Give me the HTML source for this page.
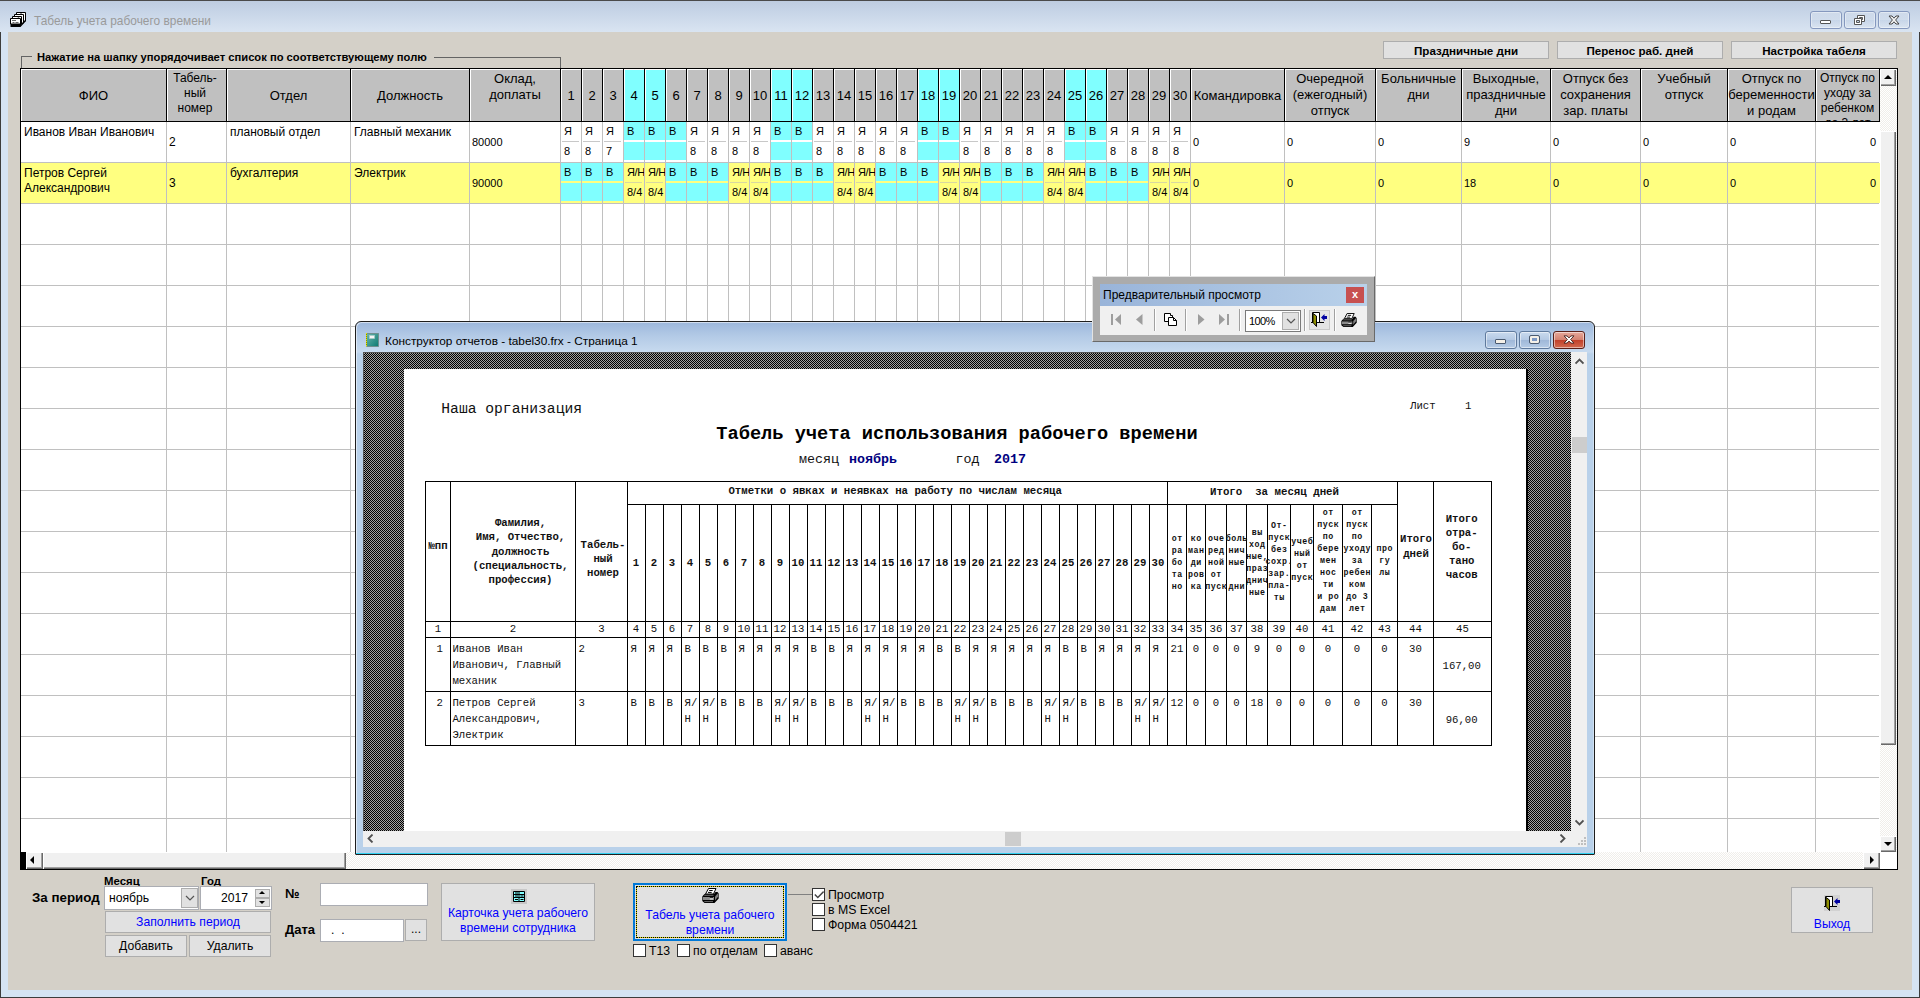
<!DOCTYPE html>
<html lang="ru"><head><meta charset="utf-8"><title>Табель учета рабочего времени</title>
<style>

*{box-sizing:border-box;margin:0;padding:0}
html,body{width:1920px;height:998px;overflow:hidden}
body{position:relative;background:#D4D0C8;font-family:"Liberation Sans",sans-serif;font-size:13px;color:#000;line-height:1}
.a{position:absolute}
.t{position:absolute;white-space:nowrap}
/* main frame */
#tb{left:0;top:0;width:1920px;height:32px;background:linear-gradient(#BDCBDF 0,#C5D3E6 30%,#D9E4F1 100%)}
#tbtop{left:0;top:0;width:1920px;height:1px;background:#4A4A4A}
#bl{left:0;top:32px;width:8px;height:966px;background:#D5E3F3;border-left:1px solid #3C3C3C}
#br{left:1912px;top:32px;width:8px;height:966px;background:#D5E3F3;border-right:1px solid #3C3C3C}
#bb{left:0;top:990px;width:1920px;height:8px;background:#D5E3F3;border-bottom:1px solid #3C3C3C;border-left:1px solid #3C3C3C;border-right:1px solid #3C3C3C}
#title{left:34px;top:14px;font-size:11.9px;color:#9A9A9A;line-height:15px}
.wb{position:absolute;top:11px;height:18px;border:1px solid #8598BE;border-radius:3px;background:linear-gradient(rgba(255,255,255,.12),rgba(255,255,255,.04) 50%,rgba(120,150,200,.08) 51%,rgba(255,255,255,.1));box-shadow:inset 0 0 0 1px rgba(255,255,255,.4)}
/* buttons */
.btn{position:absolute;background:#E1E1E1;border:1px solid #ADADAD;text-align:center;white-space:nowrap}
.bb{font-weight:bold;font-size:11.6px}
.blue{color:#0000FF}
/* grid */
#grid{left:20px;top:68px;width:1878px;height:802px;border:1px solid #000;background:#fff;overflow:hidden}
.hc{position:absolute;top:0;height:53px;background:#C0C0C0;border-right:1px solid #000;border-bottom:1px solid #000;box-shadow:inset 1px 1px 0 #fff;display:flex;align-items:center;justify-content:center;text-align:center;font-size:13px;line-height:16px;overflow:hidden}
.hc.cy{background:#80FFFF}
.vl{position:absolute;top:53px;width:1px;height:730px;background:#C0C0C0}
.hl{position:absolute;left:0;width:1858px;height:1px;background:#C0C0C0}
.row{position:absolute;left:0;width:1859px;height:40px}
.yl{background:#FFFF80}
.c{position:absolute;font-size:12px;line-height:15px;white-space:nowrap}
.n{position:absolute;font-size:11px;line-height:13px;white-space:nowrap}
.d{position:absolute;width:20px;height:18px;font-size:11px;line-height:18px;padding-left:3px;white-space:nowrap;overflow:hidden}
.d.cy{background:#80FFFF}
.ds{position:absolute;height:1px;width:17px;background:#C8C8C8}
.dith{background:repeating-conic-gradient(#fff 0 25%,#F0EEEA 0 50%) 0 0/2px 2px}
.sb{position:absolute;background:#F0F0F0;box-shadow:inset 1px 1px 0 #fff,inset -1px -1px 0 #696969,inset -2px -2px 0 #A0A0A0}
.arr{position:absolute;width:0;height:0;border:4px solid transparent}
/* report window */
#rw{left:355px;top:321px;width:1240px;height:534px;border:1px solid #1E1E1E;border-radius:6px 6px 1px 1px;background:linear-gradient(#9CB7DC 0,#B3CAE6 14px,#C7DAEF 30px,#B9D1EA 32px,#B9D1EA 100%);box-shadow:inset 1px 1px 0 rgba(255,255,255,.55),inset -1px 0 0 rgba(255,255,255,.35);overflow:hidden}
#rwin{left:7px;top:30px;width:1224px;height:495px;background:#F0F0F0;overflow:hidden}
#dark{left:0;top:0;width:1208px;height:479px;border-top:1px solid #555;border-left:1px solid #555;background:repeating-conic-gradient(#000 0 25%,#A0A0A0 0 50%) 0 0/2px 2px}
#page{left:41px;top:17px;width:1124px;height:462px;background:#fff;border-right:2px solid #000;font-family:"Liberation Mono",monospace;color:#111}
.rt{position:absolute;white-space:pre;font-family:"Liberation Mono",monospace}
.rl{position:absolute;background:#000}
.r8{font-size:10.67px;line-height:14px}
.r6{font-size:8px;line-height:12px;font-weight:bold;text-align:center;white-space:pre}
.rc{position:absolute;text-align:center;white-space:pre;font-family:"Liberation Mono",monospace}
/* toolbar */
#pt{left:1092px;top:276px;width:283px;height:66px;background:#ABABAB;border:1px solid;border-color:#E3E3E3 #696969 #696969 #E3E3E3}
#ptt{left:7px;top:7px;width:267px;height:22px;background:linear-gradient(90deg,#99B4D9,#B9D1EA)}
#ptb{left:7px;top:29px;width:267px;height:29px;background:#F0F0F0}
.sep{position:absolute;top:3px;width:2px;height:22px;border-left:1px solid #A0A0A0;border-right:1px solid #fff}
/* bottom */
.lb{position:absolute;font-weight:bold;white-space:nowrap}
.inp{position:absolute;background:#fff;border:1px solid #ABADB3}
.cb{position:absolute;width:13px;height:13px;background:#fff;border:1px solid #333}
.cl{position:absolute;font-size:12.3px;white-space:nowrap;line-height:15px}

</style></head>
<body>
<div id="tb" class="a"></div><div id="tbtop" class="a"></div>
<div id="bl" class="a"></div><div id="br" class="a"></div><div id="bb" class="a"></div>
<svg class="a" style="left:10px;top:12px" width="16" height="15" viewBox="0 0 16 15">
<path d="M16 1v8l-5.500 6h-10v-3h10z" fill="#000"/>
<path d="M6.500 .5h9v8.500h-9z" fill="#fff" stroke="#000"/>
<path d="M4.500 2.500h9v8.500h-9z" fill="#fff" stroke="#000"/>
<path d="M2.500 4.500h9v8h-9z" fill="#fff" stroke="#000"/>
<path d="M.5 6.500h10v5.500h-10z" fill="#fff" stroke="#000"/>
<path d="M11 .2l1 1.300h-2zM8.500 4.200l1 1.300h-2z" fill="#000"/>
<path d="M2 8.500h4M2.500 10.500h2M5.500 10.500h3" stroke="#555" stroke-width=".9"/></svg>
<div id="title" class="t">Табель учета рабочего времени</div>
<div class="wb" style="left:1810px;width:32px"><div class="a" style="left:9px;top:8px;width:11px;height:4px;background:#fff;border:1px solid #555;border-radius:1px"></div></div>
<div class="wb" style="left:1844px;width:32px"><svg class="a" style="left:8px;top:1px" width="14" height="14" viewBox="0 0 14 14"><path d="M4.500 2.500h7v6h-7z" fill="#fff" stroke="#555"/><path d="M6.500 4.500h3v2h-3z" fill="#C3D2E6" stroke="#555"/><path d="M1.500 5.500h7v6h-7z" fill="#fff" stroke="#555"/><path d="M3.500 7.500h3v2h-3z" fill="#C3D2E6" stroke="#555"/></svg></div>
<div class="wb" style="left:1878px;width:32px"><svg class="a" style="left:9px;top:3px" width="12" height="10" viewBox="0 0 12 10"><path d="M1 1h3l2 2.200 2-2.200h3l-3.400 4 3.400 4h-3l-2-2.200-2 2.200h-3l3.400-4z" fill="#F4F4F4" stroke="#444" stroke-linejoin="round"/></svg></div>
<div class="a" style="left:21px;top:56px;width:11px;height:1px;background:#646464"></div>
<div class="a" style="left:21px;top:56px;width:1px;height:12px;background:#646464"></div>
<div class="a" style="left:434px;top:57px;width:127px;height:1px;background:#646464"></div>
<div class="a" style="left:560px;top:57px;width:1px;height:11px;background:#646464"></div>
<div class="t" id="glab" style="left:37px;top:51px;font-weight:bold;font-size:11.2px;line-height:13px">Нажатие на шапку упорядочивает список по соответствующему полю</div>
<div class="btn bb" style="left:1383px;top:41px;width:166px;height:18px;line-height:18px;overflow:hidden">Праздничные дни</div>
<div class="btn bb" style="left:1557px;top:41px;width:166px;height:18px;line-height:18px;overflow:hidden">Перенос раб. дней</div>
<div class="btn bb" style="left:1731px;top:41px;width:166px;height:18px;line-height:18px;overflow:hidden">Настройка табеля</div>
<div id="grid" class="a">
<div class="hc" style="left:0px;width:146px;padding-top:2px;"><span>ФИО</span></div>
<div class="hc" style="left:146px;width:60px;font-size:12px;line-height:15px;align-items:flex-start;padding-top:1.500px;padding-right:3px;"><span>Табель-<br>ный<br>номер</span></div>
<div class="hc" style="left:206px;width:124px;padding-top:2px;"><span>Отдел</span></div>
<div class="hc" style="left:330px;width:119px;padding-top:2px;"><span>Должность</span></div>
<div class="hc" style="left:449px;width:91px;align-items:flex-start;padding-top:1.600px;"><span>Оклад,<br>доплаты</span></div>
<div class="hc" style="left:540px;width:21px;padding-top:2px;"><span>1</span></div>
<div class="hc" style="left:561px;width:21px;padding-top:2px;"><span>2</span></div>
<div class="hc" style="left:582px;width:21px;padding-top:2px;"><span>3</span></div>
<div class="hc cy" style="left:603px;width:21px;padding-top:2px;"><span>4</span></div>
<div class="hc cy" style="left:624px;width:21px;padding-top:2px;"><span>5</span></div>
<div class="hc" style="left:645px;width:21px;padding-top:2px;"><span>6</span></div>
<div class="hc" style="left:666px;width:21px;padding-top:2px;"><span>7</span></div>
<div class="hc" style="left:687px;width:21px;padding-top:2px;"><span>8</span></div>
<div class="hc" style="left:708px;width:21px;padding-top:2px;"><span>9</span></div>
<div class="hc" style="left:729px;width:21px;padding-top:2px;"><span>10</span></div>
<div class="hc cy" style="left:750px;width:21px;padding-top:2px;"><span>11</span></div>
<div class="hc cy" style="left:771px;width:21px;padding-top:2px;"><span>12</span></div>
<div class="hc" style="left:792px;width:21px;padding-top:2px;"><span>13</span></div>
<div class="hc" style="left:813px;width:21px;padding-top:2px;"><span>14</span></div>
<div class="hc" style="left:834px;width:21px;padding-top:2px;"><span>15</span></div>
<div class="hc" style="left:855px;width:21px;padding-top:2px;"><span>16</span></div>
<div class="hc" style="left:876px;width:21px;padding-top:2px;"><span>17</span></div>
<div class="hc cy" style="left:897px;width:21px;padding-top:2px;"><span>18</span></div>
<div class="hc cy" style="left:918px;width:21px;padding-top:2px;"><span>19</span></div>
<div class="hc" style="left:939px;width:21px;padding-top:2px;"><span>20</span></div>
<div class="hc" style="left:960px;width:21px;padding-top:2px;"><span>21</span></div>
<div class="hc" style="left:981px;width:21px;padding-top:2px;"><span>22</span></div>
<div class="hc" style="left:1002px;width:21px;padding-top:2px;"><span>23</span></div>
<div class="hc" style="left:1023px;width:21px;padding-top:2px;"><span>24</span></div>
<div class="hc cy" style="left:1044px;width:21px;padding-top:2px;"><span>25</span></div>
<div class="hc cy" style="left:1065px;width:21px;padding-top:2px;"><span>26</span></div>
<div class="hc" style="left:1086px;width:21px;padding-top:2px;"><span>27</span></div>
<div class="hc" style="left:1107px;width:21px;padding-top:2px;"><span>28</span></div>
<div class="hc" style="left:1128px;width:21px;padding-top:2px;"><span>29</span></div>
<div class="hc" style="left:1149px;width:21px;padding-top:2px;"><span>30</span></div>
<div class="hc" style="left:1170px;width:94px;padding-top:2px;"><span>Командировка</span></div>
<div class="hc" style="left:1264px;width:91px;align-items:flex-start;padding-top:1.600px;"><span>Очередной<br>(ежегодный)<br>отпуск</span></div>
<div class="hc" style="left:1355px;width:86px;align-items:flex-start;padding-top:1.600px;"><span>Больничные<br>дни</span></div>
<div class="hc" style="left:1441px;width:89px;align-items:flex-start;padding-top:1.600px;"><span>Выходные,<br>праздничные<br>дни</span></div>
<div class="hc" style="left:1530px;width:90px;align-items:flex-start;padding-top:1.600px;"><span>Отпуск без<br>сохранения<br>зар. платы</span></div>
<div class="hc" style="left:1620px;width:87px;align-items:flex-start;padding-top:1.600px;"><span>Учебный<br>отпуск</span></div>
<div class="hc" style="left:1707px;width:88px;align-items:flex-start;padding-top:1.600px;"><span>Отпуск по<br>беременности<br>и родам</span></div>
<div class="hc" style="left:1795px;width:64px;font-size:12px;line-height:15px;align-items:flex-start;padding-top:1.500px;"><span>Отпуск по<br>уходу за<br>ребенком<br>до 3 лет</span></div>
<div class="row yl" style="top:94px"></div>
<div class="hl" style="top:93px"></div>
<div class="hl" style="top:134px"></div>
<div class="hl" style="top:175px"></div>
<div class="hl" style="top:216px"></div>
<div class="hl" style="top:257px"></div>
<div class="hl" style="top:298px"></div>
<div class="hl" style="top:339px"></div>
<div class="hl" style="top:380px"></div>
<div class="hl" style="top:421px"></div>
<div class="hl" style="top:462px"></div>
<div class="hl" style="top:503px"></div>
<div class="hl" style="top:544px"></div>
<div class="hl" style="top:585px"></div>
<div class="hl" style="top:626px"></div>
<div class="hl" style="top:667px"></div>
<div class="hl" style="top:708px"></div>
<div class="hl" style="top:749px"></div>
<div class="vl" style="left:145px"></div>
<div class="vl" style="left:205px"></div>
<div class="vl" style="left:329px"></div>
<div class="vl" style="left:448px"></div>
<div class="vl" style="left:539px"></div>
<div class="vl" style="left:560px"></div>
<div class="vl" style="left:581px"></div>
<div class="vl" style="left:602px"></div>
<div class="vl" style="left:623px"></div>
<div class="vl" style="left:644px"></div>
<div class="vl" style="left:665px"></div>
<div class="vl" style="left:686px"></div>
<div class="vl" style="left:707px"></div>
<div class="vl" style="left:728px"></div>
<div class="vl" style="left:749px"></div>
<div class="vl" style="left:770px"></div>
<div class="vl" style="left:791px"></div>
<div class="vl" style="left:812px"></div>
<div class="vl" style="left:833px"></div>
<div class="vl" style="left:854px"></div>
<div class="vl" style="left:875px"></div>
<div class="vl" style="left:896px"></div>
<div class="vl" style="left:917px"></div>
<div class="vl" style="left:938px"></div>
<div class="vl" style="left:959px"></div>
<div class="vl" style="left:980px"></div>
<div class="vl" style="left:1001px"></div>
<div class="vl" style="left:1022px"></div>
<div class="vl" style="left:1043px"></div>
<div class="vl" style="left:1064px"></div>
<div class="vl" style="left:1085px"></div>
<div class="vl" style="left:1106px"></div>
<div class="vl" style="left:1127px"></div>
<div class="vl" style="left:1148px"></div>
<div class="vl" style="left:1169px"></div>
<div class="vl" style="left:1263px"></div>
<div class="vl" style="left:1354px"></div>
<div class="vl" style="left:1440px"></div>
<div class="vl" style="left:1529px"></div>
<div class="vl" style="left:1619px"></div>
<div class="vl" style="left:1706px"></div>
<div class="vl" style="left:1794px"></div>
<div class="c" style="left:3px;top:56px">Иванов Иван Иванович</div>
<div class="c" style="left:148px;top:66px">2</div>
<div class="c" style="left:209px;top:56px">плановый отдел</div>
<div class="c" style="left:333px;top:56px">Главный механик</div>
<div class="n" style="left:451px;top:67px">80000</div>
<div class="d" style="left:540px;top:53px;">Я</div>
<div class="d" style="left:540px;top:73px">8</div>
<div class="ds" style="left:541px;top:72px;background:#C8C8C8"></div>
<div class="d" style="left:561px;top:53px;">Я</div>
<div class="d" style="left:561px;top:73px">8</div>
<div class="ds" style="left:562px;top:72px;background:#C8C8C8"></div>
<div class="d" style="left:582px;top:53px;">Я</div>
<div class="d" style="left:582px;top:73px">7</div>
<div class="ds" style="left:583px;top:72px;background:#C8C8C8"></div>
<div class="d cy" style="left:603px;top:53px;">В</div>
<div class="d cy" style="left:603px;top:73px"></div>
<div class="ds" style="left:604px;top:72px;background:#fff"></div>
<div class="d cy" style="left:624px;top:53px;">В</div>
<div class="d cy" style="left:624px;top:73px"></div>
<div class="ds" style="left:625px;top:72px;background:#fff"></div>
<div class="d cy" style="left:645px;top:53px;">В</div>
<div class="d cy" style="left:645px;top:73px"></div>
<div class="ds" style="left:646px;top:72px;background:#fff"></div>
<div class="d" style="left:666px;top:53px;">Я</div>
<div class="d" style="left:666px;top:73px">8</div>
<div class="ds" style="left:667px;top:72px;background:#C8C8C8"></div>
<div class="d" style="left:687px;top:53px;">Я</div>
<div class="d" style="left:687px;top:73px">8</div>
<div class="ds" style="left:688px;top:72px;background:#C8C8C8"></div>
<div class="d" style="left:708px;top:53px;">Я</div>
<div class="d" style="left:708px;top:73px">8</div>
<div class="ds" style="left:709px;top:72px;background:#C8C8C8"></div>
<div class="d" style="left:729px;top:53px;">Я</div>
<div class="d" style="left:729px;top:73px">8</div>
<div class="ds" style="left:730px;top:72px;background:#C8C8C8"></div>
<div class="d cy" style="left:750px;top:53px;">В</div>
<div class="d cy" style="left:750px;top:73px"></div>
<div class="ds" style="left:751px;top:72px;background:#fff"></div>
<div class="d cy" style="left:771px;top:53px;">В</div>
<div class="d cy" style="left:771px;top:73px"></div>
<div class="ds" style="left:772px;top:72px;background:#fff"></div>
<div class="d" style="left:792px;top:53px;">Я</div>
<div class="d" style="left:792px;top:73px">8</div>
<div class="ds" style="left:793px;top:72px;background:#C8C8C8"></div>
<div class="d" style="left:813px;top:53px;">Я</div>
<div class="d" style="left:813px;top:73px">8</div>
<div class="ds" style="left:814px;top:72px;background:#C8C8C8"></div>
<div class="d" style="left:834px;top:53px;">Я</div>
<div class="d" style="left:834px;top:73px">8</div>
<div class="ds" style="left:835px;top:72px;background:#C8C8C8"></div>
<div class="d" style="left:855px;top:53px;">Я</div>
<div class="d" style="left:855px;top:73px">8</div>
<div class="ds" style="left:856px;top:72px;background:#C8C8C8"></div>
<div class="d" style="left:876px;top:53px;">Я</div>
<div class="d" style="left:876px;top:73px">8</div>
<div class="ds" style="left:877px;top:72px;background:#C8C8C8"></div>
<div class="d cy" style="left:897px;top:53px;">В</div>
<div class="d cy" style="left:897px;top:73px"></div>
<div class="ds" style="left:898px;top:72px;background:#fff"></div>
<div class="d cy" style="left:918px;top:53px;">В</div>
<div class="d cy" style="left:918px;top:73px"></div>
<div class="ds" style="left:919px;top:72px;background:#fff"></div>
<div class="d" style="left:939px;top:53px;">Я</div>
<div class="d" style="left:939px;top:73px">8</div>
<div class="ds" style="left:940px;top:72px;background:#C8C8C8"></div>
<div class="d" style="left:960px;top:53px;">Я</div>
<div class="d" style="left:960px;top:73px">8</div>
<div class="ds" style="left:961px;top:72px;background:#C8C8C8"></div>
<div class="d" style="left:981px;top:53px;">Я</div>
<div class="d" style="left:981px;top:73px">8</div>
<div class="ds" style="left:982px;top:72px;background:#C8C8C8"></div>
<div class="d" style="left:1002px;top:53px;">Я</div>
<div class="d" style="left:1002px;top:73px">8</div>
<div class="ds" style="left:1003px;top:72px;background:#C8C8C8"></div>
<div class="d" style="left:1023px;top:53px;">Я</div>
<div class="d" style="left:1023px;top:73px">8</div>
<div class="ds" style="left:1024px;top:72px;background:#C8C8C8"></div>
<div class="d cy" style="left:1044px;top:53px;">В</div>
<div class="d cy" style="left:1044px;top:73px"></div>
<div class="ds" style="left:1045px;top:72px;background:#fff"></div>
<div class="d cy" style="left:1065px;top:53px;">В</div>
<div class="d cy" style="left:1065px;top:73px"></div>
<div class="ds" style="left:1066px;top:72px;background:#fff"></div>
<div class="d" style="left:1086px;top:53px;">Я</div>
<div class="d" style="left:1086px;top:73px">8</div>
<div class="ds" style="left:1087px;top:72px;background:#C8C8C8"></div>
<div class="d" style="left:1107px;top:53px;">Я</div>
<div class="d" style="left:1107px;top:73px">8</div>
<div class="ds" style="left:1108px;top:72px;background:#C8C8C8"></div>
<div class="d" style="left:1128px;top:53px;">Я</div>
<div class="d" style="left:1128px;top:73px">8</div>
<div class="ds" style="left:1129px;top:72px;background:#C8C8C8"></div>
<div class="d" style="left:1149px;top:53px;">Я</div>
<div class="d" style="left:1149px;top:73px">8</div>
<div class="ds" style="left:1150px;top:72px;background:#C8C8C8"></div>
<div class="n" style="left:1172px;top:67px">0</div>
<div class="n" style="left:1266px;top:67px">0</div>
<div class="n" style="left:1357px;top:67px">0</div>
<div class="n" style="left:1443px;top:67px">9</div>
<div class="n" style="left:1532px;top:67px">0</div>
<div class="n" style="left:1622px;top:67px">0</div>
<div class="n" style="left:1709px;top:67px">0</div>
<div class="n" style="left:1795px;width:60px;text-align:right;top:67px">0</div>
<div class="c" style="left:3px;top:97px">Петров Сергей<br>Александрович</div>
<div class="c" style="left:148px;top:107px">3</div>
<div class="c" style="left:209px;top:97px">бухгалтерия</div>
<div class="c" style="left:333px;top:97px">Электрик</div>
<div class="n" style="left:451px;top:108px">90000</div>
<div class="d cy" style="left:540px;top:94px;">В</div>
<div class="d cy" style="left:540px;top:114px"></div>
<div class="ds" style="left:541px;top:113px;background:#FFFF80"></div>
<div class="d cy" style="left:561px;top:94px;">В</div>
<div class="d cy" style="left:561px;top:114px"></div>
<div class="ds" style="left:562px;top:113px;background:#FFFF80"></div>
<div class="d cy" style="left:582px;top:94px;">В</div>
<div class="d cy" style="left:582px;top:114px"></div>
<div class="ds" style="left:583px;top:113px;background:#FFFF80"></div>
<div class="d" style="left:603px;top:94px;letter-spacing:-.4px;">Я/Н</div>
<div class="d" style="left:603px;top:114px">8/4</div>
<div class="ds" style="left:604px;top:113px;background:#D8D8A0"></div>
<div class="d" style="left:624px;top:94px;letter-spacing:-.4px;">Я/Н</div>
<div class="d" style="left:624px;top:114px">8/4</div>
<div class="ds" style="left:625px;top:113px;background:#D8D8A0"></div>
<div class="d cy" style="left:645px;top:94px;">В</div>
<div class="d cy" style="left:645px;top:114px"></div>
<div class="ds" style="left:646px;top:113px;background:#FFFF80"></div>
<div class="d cy" style="left:666px;top:94px;">В</div>
<div class="d cy" style="left:666px;top:114px"></div>
<div class="ds" style="left:667px;top:113px;background:#FFFF80"></div>
<div class="d cy" style="left:687px;top:94px;">В</div>
<div class="d cy" style="left:687px;top:114px"></div>
<div class="ds" style="left:688px;top:113px;background:#FFFF80"></div>
<div class="d" style="left:708px;top:94px;letter-spacing:-.4px;">Я/Н</div>
<div class="d" style="left:708px;top:114px">8/4</div>
<div class="ds" style="left:709px;top:113px;background:#D8D8A0"></div>
<div class="d" style="left:729px;top:94px;letter-spacing:-.4px;">Я/Н</div>
<div class="d" style="left:729px;top:114px">8/4</div>
<div class="ds" style="left:730px;top:113px;background:#D8D8A0"></div>
<div class="d cy" style="left:750px;top:94px;">В</div>
<div class="d cy" style="left:750px;top:114px"></div>
<div class="ds" style="left:751px;top:113px;background:#FFFF80"></div>
<div class="d cy" style="left:771px;top:94px;">В</div>
<div class="d cy" style="left:771px;top:114px"></div>
<div class="ds" style="left:772px;top:113px;background:#FFFF80"></div>
<div class="d cy" style="left:792px;top:94px;">В</div>
<div class="d cy" style="left:792px;top:114px"></div>
<div class="ds" style="left:793px;top:113px;background:#FFFF80"></div>
<div class="d" style="left:813px;top:94px;letter-spacing:-.4px;">Я/Н</div>
<div class="d" style="left:813px;top:114px">8/4</div>
<div class="ds" style="left:814px;top:113px;background:#D8D8A0"></div>
<div class="d" style="left:834px;top:94px;letter-spacing:-.4px;">Я/Н</div>
<div class="d" style="left:834px;top:114px">8/4</div>
<div class="ds" style="left:835px;top:113px;background:#D8D8A0"></div>
<div class="d cy" style="left:855px;top:94px;">В</div>
<div class="d cy" style="left:855px;top:114px"></div>
<div class="ds" style="left:856px;top:113px;background:#FFFF80"></div>
<div class="d cy" style="left:876px;top:94px;">В</div>
<div class="d cy" style="left:876px;top:114px"></div>
<div class="ds" style="left:877px;top:113px;background:#FFFF80"></div>
<div class="d cy" style="left:897px;top:94px;">В</div>
<div class="d cy" style="left:897px;top:114px"></div>
<div class="ds" style="left:898px;top:113px;background:#FFFF80"></div>
<div class="d" style="left:918px;top:94px;letter-spacing:-.4px;">Я/Н</div>
<div class="d" style="left:918px;top:114px">8/4</div>
<div class="ds" style="left:919px;top:113px;background:#D8D8A0"></div>
<div class="d" style="left:939px;top:94px;letter-spacing:-.4px;">Я/Н</div>
<div class="d" style="left:939px;top:114px">8/4</div>
<div class="ds" style="left:940px;top:113px;background:#D8D8A0"></div>
<div class="d cy" style="left:960px;top:94px;">В</div>
<div class="d cy" style="left:960px;top:114px"></div>
<div class="ds" style="left:961px;top:113px;background:#FFFF80"></div>
<div class="d cy" style="left:981px;top:94px;">В</div>
<div class="d cy" style="left:981px;top:114px"></div>
<div class="ds" style="left:982px;top:113px;background:#FFFF80"></div>
<div class="d cy" style="left:1002px;top:94px;">В</div>
<div class="d cy" style="left:1002px;top:114px"></div>
<div class="ds" style="left:1003px;top:113px;background:#FFFF80"></div>
<div class="d" style="left:1023px;top:94px;letter-spacing:-.4px;">Я/Н</div>
<div class="d" style="left:1023px;top:114px">8/4</div>
<div class="ds" style="left:1024px;top:113px;background:#D8D8A0"></div>
<div class="d" style="left:1044px;top:94px;letter-spacing:-.4px;">Я/Н</div>
<div class="d" style="left:1044px;top:114px">8/4</div>
<div class="ds" style="left:1045px;top:113px;background:#D8D8A0"></div>
<div class="d cy" style="left:1065px;top:94px;">В</div>
<div class="d cy" style="left:1065px;top:114px"></div>
<div class="ds" style="left:1066px;top:113px;background:#FFFF80"></div>
<div class="d cy" style="left:1086px;top:94px;">В</div>
<div class="d cy" style="left:1086px;top:114px"></div>
<div class="ds" style="left:1087px;top:113px;background:#FFFF80"></div>
<div class="d cy" style="left:1107px;top:94px;">В</div>
<div class="d cy" style="left:1107px;top:114px"></div>
<div class="ds" style="left:1108px;top:113px;background:#FFFF80"></div>
<div class="d" style="left:1128px;top:94px;letter-spacing:-.4px;">Я/Н</div>
<div class="d" style="left:1128px;top:114px">8/4</div>
<div class="ds" style="left:1129px;top:113px;background:#D8D8A0"></div>
<div class="d" style="left:1149px;top:94px;letter-spacing:-.4px;">Я/Н</div>
<div class="d" style="left:1149px;top:114px">8/4</div>
<div class="ds" style="left:1150px;top:113px;background:#D8D8A0"></div>
<div class="n" style="left:1172px;top:108px">0</div>
<div class="n" style="left:1266px;top:108px">0</div>
<div class="n" style="left:1357px;top:108px">0</div>
<div class="n" style="left:1443px;top:108px">18</div>
<div class="n" style="left:1532px;top:108px">0</div>
<div class="n" style="left:1622px;top:108px">0</div>
<div class="n" style="left:1709px;top:108px">0</div>
<div class="n" style="left:1795px;width:60px;text-align:right;top:108px">0</div>
<div class="a dith" style="left:1859px;top:0;width:17px;height:783px"></div>
<div class="sb" style="left:1859px;top:0;width:16px;height:17px"><div class="arr" style="left:4px;top:2px;border-bottom:4px solid #000;border-top-width:4px"></div></div>
<div class="sb" style="left:1859px;top:62px;width:16px;height:614px"></div>
<div class="sb" style="left:1859px;top:767px;width:16px;height:16px"><div class="arr" style="left:4px;top:6px;border-top:4px solid #000;border-bottom-width:0"></div></div>
<div class="a dith" style="left:0;top:783px;width:1859px;height:17px"></div>
<div class="a" style="left:0;top:783px;width:5px;height:17px;background:#000"></div>
<div class="sb" style="left:5px;top:783px;width:17px;height:17px"><div class="arr" style="left:4px;top:4px;border-right:4px solid #000;border-left-width:0"></div></div>
<div class="sb" style="left:22px;top:783px;width:303px;height:17px"></div>
<div class="sb" style="left:1842px;top:783px;width:17px;height:17px"><div class="arr" style="left:7px;top:4px;border-left:4px solid #000;border-right-width:0"></div></div>
<div class="a" style="left:1859px;top:783px;width:17px;height:17px;background:#fff"></div>
</div>
<div id="rw" class="a">
<svg class="a" style="left:10px;top:11px" width="13" height="14" viewBox="0 0 13 14"><defs><linearGradient id="tg" x1="0" y1="0" x2="1" y2="1"><stop offset="0" stop-color="#6DB5AE"/><stop offset="1" stop-color="#0B7A72"/></linearGradient></defs><rect x="1" y="0" width="11.500" height="13.500" fill="url(#tg)"/><path d="M1 .5h11.500v13h-11.500" fill="none" stroke="#6F8F8E"/><path d="M.5 0v13.500" stroke="#E8E800" stroke-dasharray="1 1"/><path d="M.5 0v13.500" stroke="#8A8A00" stroke-dasharray="1 1" stroke-dashoffset="1"/><rect x="3.500" y="2.500" width="5" height="3" fill="#F6F6F6" stroke="#A9CFCB" stroke-width=".7"/></svg>
<div class="t" id="rtitle" style="left:29px;top:12px;font-size:11.830px;line-height:15px">Конструктор отчетов - tabel30.frx - Страница 1</div>
<div style="position:absolute;top:9px;height:18px;width:32px;border:1px solid #5F7A9D;border-radius:3px;box-shadow:inset 0 0 0 1px rgba(255,255,255,.5);left:1129px;background:linear-gradient(#C9DAEE,#B3C8E3 50%,#9FB8D8 51%,#B5CBE6)"><div class="a" style="left:9px;top:7px;width:11px;height:5px;background:#F4F0E8;border:1px solid #4A5A70;border-radius:1px"></div></div>
<div style="position:absolute;top:9px;height:18px;width:32px;border:1px solid #5F7A9D;border-radius:3px;box-shadow:inset 0 0 0 1px rgba(255,255,255,.5);left:1163px;background:linear-gradient(#C9DAEE,#B3C8E3 50%,#9FB8D8 51%,#B5CBE6)"><div class="a" style="left:10px;top:4px;width:9px;height:7px;background:#7C98C4;border:2px solid #F4F0E8;outline:1px solid #4A5A70;border-radius:1px"></div></div>
<div style="position:absolute;top:9px;height:18px;width:32px;border:1px solid #5F7A9D;border-radius:3px;box-shadow:inset 0 0 0 1px rgba(255,255,255,.5);left:1197px;border-color:#5A1F18;background:linear-gradient(#E6A99C,#D4806E 50%,#C1402A 51%,#D26A50)"><svg class="a" style="left:9px;top:3px" width="12" height="9" viewBox="0 0 12 10" preserveAspectRatio="none"><path d="M1 1h3l2 2.200 2-2.200h3l-3.400 4 3.400 4h-3l-2-2.200-2 2.200h-3l3.400-4z" fill="#fff" stroke="#4A2A28" stroke-linejoin="round"/></svg></div>
<div class="a" style="left:0;top:531px;width:1238px;height:1px;background:#2FD0F0"></div>
<div id="rwin" class="a">
<div id="dark" class="a"></div>
<svg class="a" style="left:1212px;top:5px" width="9" height="9" viewBox="0 0 9 9"><path d="M.5 6.500l4-4 4 4" fill="none" stroke="#505050" stroke-width="1.800"/></svg>
<svg class="a" style="left:1212px;top:466px" width="9" height="9" viewBox="0 0 9 9"><path d="M.5 2.500l4 4 4-4" fill="none" stroke="#505050" stroke-width="1.800"/></svg>
<div class="a" style="left:1209px;top:85px;width:15px;height:16px;background:#CDCDCD"></div>
<svg class="a" style="left:3px;top:482px" width="9" height="9" viewBox="0 0 9 9"><path d="M6.500 .5l-4 4 4 4" fill="none" stroke="#505050" stroke-width="1.800"/></svg>
<svg class="a" style="left:1195px;top:482px" width="9" height="9" viewBox="0 0 9 9"><path d="M2.500 .5l4 4-4 4" fill="none" stroke="#505050" stroke-width="1.800"/></svg>
<div class="a" style="left:642px;top:480px;width:16px;height:14px;background:#CDCDCD"></div>
<svg class="a" style="left:1213px;top:484px" width="10" height="10" viewBox="0 0 10 10"><path d="M8 1h2v2h-2zM5 4h2v2h-2zM8 4h2v2h-2zM2 7h2v2h-2zM5 7h2v2h-2zM8 7h2v2h-2z" fill="#BFBFBF"/></svg>
<div id="page" class="a">
<div class="rt" style="left:37.3px;top:31.0px;font-size:14.67px;line-height:18px;">Наша организация</div>
<div class="rt" style="left:1006.0px;top:29.6px;font-size:10.67px;line-height:14px;">Лист</div>
<div class="rt" style="left:1061.0px;top:29.6px;font-size:10.67px;line-height:14px;">1</div>
<div class="rt" style="left:312.3px;top:54.0px;font-size:18.67px;line-height:22px;font-weight:bold;color:#000;">Табель учета использования рабочего времени</div>
<div class="rt" style="left:394.9px;top:83.0px;font-size:13.33px;line-height:16px;">месяц</div>
<div class="rt" style="left:445.0px;top:83.0px;font-size:13.33px;line-height:16px;color:#000080;font-weight:bold;">ноябрь</div>
<div class="rt" style="left:551.5px;top:83.0px;font-size:13.33px;line-height:16px;">год</div>
<div class="rt" style="left:589.9px;top:83.0px;font-size:13.33px;line-height:16px;color:#000080;font-weight:bold;">2017</div>
<div class="rl" style="left:21px;top:112px;width:1067px;height:1px"></div>
<div class="rl" style="left:21px;top:252px;width:1067px;height:1px"></div>
<div class="rl" style="left:21px;top:268px;width:1067px;height:1px"></div>
<div class="rl" style="left:21px;top:322px;width:1067px;height:1px"></div>
<div class="rl" style="left:21px;top:376px;width:1067px;height:1px"></div>
<div class="rl" style="left:223px;top:135px;width:771px;height:1px"></div>
<div class="rl" style="left:21px;top:112px;width:1px;height:265px"></div>
<div class="rl" style="left:46px;top:112px;width:1px;height:265px"></div>
<div class="rl" style="left:171px;top:112px;width:1px;height:265px"></div>
<div class="rl" style="left:223px;top:112px;width:1px;height:265px"></div>
<div class="rl" style="left:763px;top:112px;width:1px;height:265px"></div>
<div class="rl" style="left:993px;top:112px;width:1px;height:265px"></div>
<div class="rl" style="left:1029px;top:112px;width:1px;height:265px"></div>
<div class="rl" style="left:1087px;top:112px;width:1px;height:265px"></div>
<div class="rl" style="left:241px;top:135px;width:1px;height:242px"></div>
<div class="rl" style="left:259px;top:135px;width:1px;height:242px"></div>
<div class="rl" style="left:277px;top:135px;width:1px;height:242px"></div>
<div class="rl" style="left:295px;top:135px;width:1px;height:242px"></div>
<div class="rl" style="left:313px;top:135px;width:1px;height:242px"></div>
<div class="rl" style="left:331px;top:135px;width:1px;height:242px"></div>
<div class="rl" style="left:349px;top:135px;width:1px;height:242px"></div>
<div class="rl" style="left:367px;top:135px;width:1px;height:242px"></div>
<div class="rl" style="left:385px;top:135px;width:1px;height:242px"></div>
<div class="rl" style="left:403px;top:135px;width:1px;height:242px"></div>
<div class="rl" style="left:421px;top:135px;width:1px;height:242px"></div>
<div class="rl" style="left:439px;top:135px;width:1px;height:242px"></div>
<div class="rl" style="left:457px;top:135px;width:1px;height:242px"></div>
<div class="rl" style="left:475px;top:135px;width:1px;height:242px"></div>
<div class="rl" style="left:493px;top:135px;width:1px;height:242px"></div>
<div class="rl" style="left:511px;top:135px;width:1px;height:242px"></div>
<div class="rl" style="left:529px;top:135px;width:1px;height:242px"></div>
<div class="rl" style="left:547px;top:135px;width:1px;height:242px"></div>
<div class="rl" style="left:565px;top:135px;width:1px;height:242px"></div>
<div class="rl" style="left:583px;top:135px;width:1px;height:242px"></div>
<div class="rl" style="left:601px;top:135px;width:1px;height:242px"></div>
<div class="rl" style="left:619px;top:135px;width:1px;height:242px"></div>
<div class="rl" style="left:637px;top:135px;width:1px;height:242px"></div>
<div class="rl" style="left:655px;top:135px;width:1px;height:242px"></div>
<div class="rl" style="left:673px;top:135px;width:1px;height:242px"></div>
<div class="rl" style="left:691px;top:135px;width:1px;height:242px"></div>
<div class="rl" style="left:709px;top:135px;width:1px;height:242px"></div>
<div class="rl" style="left:727px;top:135px;width:1px;height:242px"></div>
<div class="rl" style="left:745px;top:135px;width:1px;height:242px"></div>
<div class="rl" style="left:782px;top:135px;width:1px;height:242px"></div>
<div class="rl" style="left:801px;top:135px;width:1px;height:242px"></div>
<div class="rl" style="left:822px;top:135px;width:1px;height:242px"></div>
<div class="rl" style="left:842px;top:135px;width:1px;height:242px"></div>
<div class="rl" style="left:863px;top:135px;width:1px;height:242px"></div>
<div class="rl" style="left:886px;top:135px;width:1px;height:242px"></div>
<div class="rl" style="left:909px;top:135px;width:1px;height:242px"></div>
<div class="rl" style="left:938px;top:135px;width:1px;height:242px"></div>
<div class="rl" style="left:967px;top:135px;width:1px;height:242px"></div>
<div class="rc" style="left:19.0px;width:30px;top:170.2px;font-size:10.67px;line-height:14px;font-weight:bold;">№пп</div>
<div class="rc" style="left:51.5px;width:130px;top:147.0px;font-size:10.67px;line-height:14.3px;font-weight:bold;">Фамилия,<br>Имя, Отчество,<br>должность<br>(специальность,<br>профессия)</div>
<div class="rc" style="left:169.0px;width:60px;top:168.6px;font-size:10.67px;line-height:14px;font-weight:bold;">Табель-<br>ный<br>номер</div>
<div class="rt" style="left:324.4px;top:115.4px;font-size:10.7px;line-height:14px;font-weight:bold;">Отметки о явках и неявках на работу по числам месяца</div>
<div class="rt" style="left:806.0px;top:115.8px;font-size:10.75px;line-height:14px;font-weight:bold;">Итого  за месяц дней</div>
<div class="rc" style="left:223.0px;width:18px;top:187.2px;font-size:10.67px;line-height:14px;font-weight:bold;">1</div>
<div class="rc" style="left:241.0px;width:18px;top:187.2px;font-size:10.67px;line-height:14px;font-weight:bold;">2</div>
<div class="rc" style="left:259.0px;width:18px;top:187.2px;font-size:10.67px;line-height:14px;font-weight:bold;">3</div>
<div class="rc" style="left:277.0px;width:18px;top:187.2px;font-size:10.67px;line-height:14px;font-weight:bold;">4</div>
<div class="rc" style="left:295.0px;width:18px;top:187.2px;font-size:10.67px;line-height:14px;font-weight:bold;">5</div>
<div class="rc" style="left:313.0px;width:18px;top:187.2px;font-size:10.67px;line-height:14px;font-weight:bold;">6</div>
<div class="rc" style="left:331.0px;width:18px;top:187.2px;font-size:10.67px;line-height:14px;font-weight:bold;">7</div>
<div class="rc" style="left:349.0px;width:18px;top:187.2px;font-size:10.67px;line-height:14px;font-weight:bold;">8</div>
<div class="rc" style="left:367.0px;width:18px;top:187.2px;font-size:10.67px;line-height:14px;font-weight:bold;">9</div>
<div class="rc" style="left:385.0px;width:18px;top:187.2px;font-size:10.67px;line-height:14px;font-weight:bold;">10</div>
<div class="rc" style="left:403.0px;width:18px;top:187.2px;font-size:10.67px;line-height:14px;font-weight:bold;">11</div>
<div class="rc" style="left:421.0px;width:18px;top:187.2px;font-size:10.67px;line-height:14px;font-weight:bold;">12</div>
<div class="rc" style="left:439.0px;width:18px;top:187.2px;font-size:10.67px;line-height:14px;font-weight:bold;">13</div>
<div class="rc" style="left:457.0px;width:18px;top:187.2px;font-size:10.67px;line-height:14px;font-weight:bold;">14</div>
<div class="rc" style="left:475.0px;width:18px;top:187.2px;font-size:10.67px;line-height:14px;font-weight:bold;">15</div>
<div class="rc" style="left:493.0px;width:18px;top:187.2px;font-size:10.67px;line-height:14px;font-weight:bold;">16</div>
<div class="rc" style="left:511.0px;width:18px;top:187.2px;font-size:10.67px;line-height:14px;font-weight:bold;">17</div>
<div class="rc" style="left:529.0px;width:18px;top:187.2px;font-size:10.67px;line-height:14px;font-weight:bold;">18</div>
<div class="rc" style="left:547.0px;width:18px;top:187.2px;font-size:10.67px;line-height:14px;font-weight:bold;">19</div>
<div class="rc" style="left:565.0px;width:18px;top:187.2px;font-size:10.67px;line-height:14px;font-weight:bold;">20</div>
<div class="rc" style="left:583.0px;width:18px;top:187.2px;font-size:10.67px;line-height:14px;font-weight:bold;">21</div>
<div class="rc" style="left:601.0px;width:18px;top:187.2px;font-size:10.67px;line-height:14px;font-weight:bold;">22</div>
<div class="rc" style="left:619.0px;width:18px;top:187.2px;font-size:10.67px;line-height:14px;font-weight:bold;">23</div>
<div class="rc" style="left:637.0px;width:18px;top:187.2px;font-size:10.67px;line-height:14px;font-weight:bold;">24</div>
<div class="rc" style="left:655.0px;width:18px;top:187.2px;font-size:10.67px;line-height:14px;font-weight:bold;">25</div>
<div class="rc" style="left:673.0px;width:18px;top:187.2px;font-size:10.67px;line-height:14px;font-weight:bold;">26</div>
<div class="rc" style="left:691.0px;width:18px;top:187.2px;font-size:10.67px;line-height:14px;font-weight:bold;">27</div>
<div class="rc" style="left:709.0px;width:18px;top:187.2px;font-size:10.67px;line-height:14px;font-weight:bold;">28</div>
<div class="rc" style="left:727.0px;width:18px;top:187.2px;font-size:10.67px;line-height:14px;font-weight:bold;">29</div>
<div class="rc" style="left:745.0px;width:18px;top:187.2px;font-size:10.67px;line-height:14px;font-weight:bold;">30</div>
<div class="rc" style="left:992.0px;width:40px;top:163.4px;font-size:10.67px;line-height:14.3px;font-weight:bold;">Итого<br>дней</div>
<div class="rc" style="left:1032.7px;width:50px;top:142.6px;font-size:10.67px;line-height:14.1px;font-weight:bold;">Итого<br>отра-<br>бо-<br>тано<br>часов</div>
<div class="rc r6" style="left:753.2px;width:40px;top:164.4px;font-size:8.300px;line-height:12px;letter-spacing:.5px">от<br>ра<br>бо<br>та<br>но</div>
<div class="rc r6" style="left:772.2px;width:40px;top:164.4px;font-size:8.300px;line-height:12px;letter-spacing:.5px">ко<br>ман<br>ди<br>ров<br>ка</div>
<div class="rc r6" style="left:792.2px;width:40px;top:164.4px;font-size:8.300px;line-height:12px;letter-spacing:.5px">оче<br>ред<br>ной<br>от<br>пуск</div>
<div class="rc r6" style="left:812.8px;width:40px;top:164.4px;font-size:8.300px;line-height:12px;letter-spacing:.5px">боль<br>нич<br>ные<br> <br>дни</div>
<div class="rc r6" style="left:833.2px;width:40px;top:158.4px;font-size:8.300px;line-height:12px;letter-spacing:.5px">вы<br>ход<br>ные,<br>праз<br>днич<br>ные</div>
<div class="rc r6" style="left:855.2px;width:40px;top:151.2px;font-size:8.300px;line-height:12px;letter-spacing:.5px">От-<br>пуск<br>без<br>сохр.<br>зар.<br>пла-<br>ты</div>
<div class="rc r6" style="left:878.2px;width:40px;top:167.2px;font-size:8.300px;line-height:12px;letter-spacing:.5px">учеб<br>ный<br>от<br>пуск</div>
<div class="rc r6" style="left:904.2px;width:40px;top:137.5px;font-size:8.300px;line-height:12px;letter-spacing:.5px">от<br>пуск<br>по<br>бере<br>мен<br>нос<br>ти<br>и ро<br>дам</div>
<div class="rc r6" style="left:933.2px;width:40px;top:137.5px;font-size:8.300px;line-height:12px;letter-spacing:.5px">от<br>пуск<br>по<br>уходу<br>за<br>ребен<br>ком<br>до 3<br>лет</div>
<div class="rc r6" style="left:960.8px;width:40px;top:174.1px;font-size:8.300px;line-height:12px;letter-spacing:.5px">про<br>гу<br>лы</div>
<div class="rc" style="left:19.0px;width:30px;top:253.2px;font-size:10.67px;line-height:14px;">1</div>
<div class="rc" style="left:94.0px;width:30px;top:253.2px;font-size:10.67px;line-height:14px;">2</div>
<div class="rc" style="left:182.5px;width:30px;top:253.2px;font-size:10.67px;line-height:14px;">3</div>
<div class="rc" style="left:217.0px;width:30px;top:253.2px;font-size:10.67px;line-height:14px;">4</div>
<div class="rc" style="left:235.0px;width:30px;top:253.2px;font-size:10.67px;line-height:14px;">5</div>
<div class="rc" style="left:253.0px;width:30px;top:253.2px;font-size:10.67px;line-height:14px;">6</div>
<div class="rc" style="left:271.0px;width:30px;top:253.2px;font-size:10.67px;line-height:14px;">7</div>
<div class="rc" style="left:289.0px;width:30px;top:253.2px;font-size:10.67px;line-height:14px;">8</div>
<div class="rc" style="left:307.0px;width:30px;top:253.2px;font-size:10.67px;line-height:14px;">9</div>
<div class="rc" style="left:325.0px;width:30px;top:253.2px;font-size:10.67px;line-height:14px;">10</div>
<div class="rc" style="left:343.0px;width:30px;top:253.2px;font-size:10.67px;line-height:14px;">11</div>
<div class="rc" style="left:361.0px;width:30px;top:253.2px;font-size:10.67px;line-height:14px;">12</div>
<div class="rc" style="left:379.0px;width:30px;top:253.2px;font-size:10.67px;line-height:14px;">13</div>
<div class="rc" style="left:397.0px;width:30px;top:253.2px;font-size:10.67px;line-height:14px;">14</div>
<div class="rc" style="left:415.0px;width:30px;top:253.2px;font-size:10.67px;line-height:14px;">15</div>
<div class="rc" style="left:433.0px;width:30px;top:253.2px;font-size:10.67px;line-height:14px;">16</div>
<div class="rc" style="left:451.0px;width:30px;top:253.2px;font-size:10.67px;line-height:14px;">17</div>
<div class="rc" style="left:469.0px;width:30px;top:253.2px;font-size:10.67px;line-height:14px;">18</div>
<div class="rc" style="left:487.0px;width:30px;top:253.2px;font-size:10.67px;line-height:14px;">19</div>
<div class="rc" style="left:505.0px;width:30px;top:253.2px;font-size:10.67px;line-height:14px;">20</div>
<div class="rc" style="left:523.0px;width:30px;top:253.2px;font-size:10.67px;line-height:14px;">21</div>
<div class="rc" style="left:541.0px;width:30px;top:253.2px;font-size:10.67px;line-height:14px;">22</div>
<div class="rc" style="left:559.0px;width:30px;top:253.2px;font-size:10.67px;line-height:14px;">23</div>
<div class="rc" style="left:577.0px;width:30px;top:253.2px;font-size:10.67px;line-height:14px;">24</div>
<div class="rc" style="left:595.0px;width:30px;top:253.2px;font-size:10.67px;line-height:14px;">25</div>
<div class="rc" style="left:613.0px;width:30px;top:253.2px;font-size:10.67px;line-height:14px;">26</div>
<div class="rc" style="left:631.0px;width:30px;top:253.2px;font-size:10.67px;line-height:14px;">27</div>
<div class="rc" style="left:649.0px;width:30px;top:253.2px;font-size:10.67px;line-height:14px;">28</div>
<div class="rc" style="left:667.0px;width:30px;top:253.2px;font-size:10.67px;line-height:14px;">29</div>
<div class="rc" style="left:685.0px;width:30px;top:253.2px;font-size:10.67px;line-height:14px;">30</div>
<div class="rc" style="left:703.0px;width:30px;top:253.2px;font-size:10.67px;line-height:14px;">31</div>
<div class="rc" style="left:721.0px;width:30px;top:253.2px;font-size:10.67px;line-height:14px;">32</div>
<div class="rc" style="left:739.0px;width:30px;top:253.2px;font-size:10.67px;line-height:14px;">33</div>
<div class="rc" style="left:758.0px;width:30px;top:253.2px;font-size:10.67px;line-height:14px;">34</div>
<div class="rc" style="left:777.0px;width:30px;top:253.2px;font-size:10.67px;line-height:14px;">35</div>
<div class="rc" style="left:797.0px;width:30px;top:253.2px;font-size:10.67px;line-height:14px;">36</div>
<div class="rc" style="left:817.5px;width:30px;top:253.2px;font-size:10.67px;line-height:14px;">37</div>
<div class="rc" style="left:838.0px;width:30px;top:253.2px;font-size:10.67px;line-height:14px;">38</div>
<div class="rc" style="left:860.0px;width:30px;top:253.2px;font-size:10.67px;line-height:14px;">39</div>
<div class="rc" style="left:883.0px;width:30px;top:253.2px;font-size:10.67px;line-height:14px;">40</div>
<div class="rc" style="left:909.0px;width:30px;top:253.2px;font-size:10.67px;line-height:14px;">41</div>
<div class="rc" style="left:938.0px;width:30px;top:253.2px;font-size:10.67px;line-height:14px;">42</div>
<div class="rc" style="left:965.5px;width:30px;top:253.2px;font-size:10.67px;line-height:14px;">43</div>
<div class="rc" style="left:996.5px;width:30px;top:253.2px;font-size:10.67px;line-height:14px;">44</div>
<div class="rc" style="left:1043.5px;width:30px;top:253.2px;font-size:10.67px;line-height:14px;">45</div>
<div class="rt" style="left:32.5px;top:271.7px;font-size:10.67px;line-height:16px;">1</div>
<div class="rt" style="left:48.4px;top:271.7px;font-size:10.67px;line-height:16px;">Иванов Иван<br>Иванович, Главный<br>механик</div>
<div class="rt" style="left:174.6px;top:271.7px;font-size:10.67px;line-height:16px;">2</div>
<div class="rt" style="left:226.5px;top:271.7px;font-size:10.67px;line-height:16px;">Я</div>
<div class="rt" style="left:244.5px;top:271.7px;font-size:10.67px;line-height:16px;">Я</div>
<div class="rt" style="left:262.5px;top:271.7px;font-size:10.67px;line-height:16px;">Я</div>
<div class="rt" style="left:280.5px;top:271.7px;font-size:10.67px;line-height:16px;">В</div>
<div class="rt" style="left:298.5px;top:271.7px;font-size:10.67px;line-height:16px;">В</div>
<div class="rt" style="left:316.5px;top:271.7px;font-size:10.67px;line-height:16px;">В</div>
<div class="rt" style="left:334.5px;top:271.7px;font-size:10.67px;line-height:16px;">Я</div>
<div class="rt" style="left:352.5px;top:271.7px;font-size:10.67px;line-height:16px;">Я</div>
<div class="rt" style="left:370.5px;top:271.7px;font-size:10.67px;line-height:16px;">Я</div>
<div class="rt" style="left:388.5px;top:271.7px;font-size:10.67px;line-height:16px;">Я</div>
<div class="rt" style="left:406.5px;top:271.7px;font-size:10.67px;line-height:16px;">В</div>
<div class="rt" style="left:424.5px;top:271.7px;font-size:10.67px;line-height:16px;">В</div>
<div class="rt" style="left:442.5px;top:271.7px;font-size:10.67px;line-height:16px;">Я</div>
<div class="rt" style="left:460.5px;top:271.7px;font-size:10.67px;line-height:16px;">Я</div>
<div class="rt" style="left:478.5px;top:271.7px;font-size:10.67px;line-height:16px;">Я</div>
<div class="rt" style="left:496.5px;top:271.7px;font-size:10.67px;line-height:16px;">Я</div>
<div class="rt" style="left:514.5px;top:271.7px;font-size:10.67px;line-height:16px;">Я</div>
<div class="rt" style="left:532.5px;top:271.7px;font-size:10.67px;line-height:16px;">В</div>
<div class="rt" style="left:550.5px;top:271.7px;font-size:10.67px;line-height:16px;">В</div>
<div class="rt" style="left:568.5px;top:271.7px;font-size:10.67px;line-height:16px;">Я</div>
<div class="rt" style="left:586.5px;top:271.7px;font-size:10.67px;line-height:16px;">Я</div>
<div class="rt" style="left:604.5px;top:271.7px;font-size:10.67px;line-height:16px;">Я</div>
<div class="rt" style="left:622.5px;top:271.7px;font-size:10.67px;line-height:16px;">Я</div>
<div class="rt" style="left:640.5px;top:271.7px;font-size:10.67px;line-height:16px;">Я</div>
<div class="rt" style="left:658.5px;top:271.7px;font-size:10.67px;line-height:16px;">В</div>
<div class="rt" style="left:676.5px;top:271.7px;font-size:10.67px;line-height:16px;">В</div>
<div class="rt" style="left:694.5px;top:271.7px;font-size:10.67px;line-height:16px;">Я</div>
<div class="rt" style="left:712.5px;top:271.7px;font-size:10.67px;line-height:16px;">Я</div>
<div class="rt" style="left:730.5px;top:271.7px;font-size:10.67px;line-height:16px;">Я</div>
<div class="rt" style="left:748.5px;top:271.7px;font-size:10.67px;line-height:16px;">Я</div>
<div class="rc" style="left:758.0px;width:30px;top:271.7px;font-size:10.67px;line-height:16px;">21</div>
<div class="rc" style="left:777.0px;width:30px;top:271.7px;font-size:10.67px;line-height:16px;">0</div>
<div class="rc" style="left:797.0px;width:30px;top:271.7px;font-size:10.67px;line-height:16px;">0</div>
<div class="rc" style="left:817.5px;width:30px;top:271.7px;font-size:10.67px;line-height:16px;">0</div>
<div class="rc" style="left:838.0px;width:30px;top:271.7px;font-size:10.67px;line-height:16px;">9</div>
<div class="rc" style="left:860.0px;width:30px;top:271.7px;font-size:10.67px;line-height:16px;">0</div>
<div class="rc" style="left:883.0px;width:30px;top:271.7px;font-size:10.67px;line-height:16px;">0</div>
<div class="rc" style="left:909.0px;width:30px;top:271.7px;font-size:10.67px;line-height:16px;">0</div>
<div class="rc" style="left:938.0px;width:30px;top:271.7px;font-size:10.67px;line-height:16px;">0</div>
<div class="rc" style="left:965.5px;width:30px;top:271.7px;font-size:10.67px;line-height:16px;">0</div>
<div class="rc" style="left:996.5px;width:30px;top:271.7px;font-size:10.67px;line-height:16px;">30</div>
<div class="rc" style="left:1027.7px;width:60px;top:289.3px;font-size:10.67px;line-height:16px;">167,00</div>
<div class="rt" style="left:32.5px;top:325.8px;font-size:10.67px;line-height:16px;">2</div>
<div class="rt" style="left:48.4px;top:325.8px;font-size:10.67px;line-height:16px;">Петров Сергей<br>Александрович,<br>Электрик</div>
<div class="rt" style="left:174.6px;top:325.8px;font-size:10.67px;line-height:16px;">3</div>
<div class="rt" style="left:226.5px;top:325.8px;font-size:10.67px;line-height:16px;">В</div>
<div class="rt" style="left:244.5px;top:325.8px;font-size:10.67px;line-height:16px;">В</div>
<div class="rt" style="left:262.5px;top:325.8px;font-size:10.67px;line-height:16px;">В</div>
<div class="rt" style="left:280.5px;top:325.8px;font-size:10.67px;line-height:16px;">Я/<br>Н</div>
<div class="rt" style="left:298.5px;top:325.8px;font-size:10.67px;line-height:16px;">Я/<br>Н</div>
<div class="rt" style="left:316.5px;top:325.8px;font-size:10.67px;line-height:16px;">В</div>
<div class="rt" style="left:334.5px;top:325.8px;font-size:10.67px;line-height:16px;">В</div>
<div class="rt" style="left:352.5px;top:325.8px;font-size:10.67px;line-height:16px;">В</div>
<div class="rt" style="left:370.5px;top:325.8px;font-size:10.67px;line-height:16px;">Я/<br>Н</div>
<div class="rt" style="left:388.5px;top:325.8px;font-size:10.67px;line-height:16px;">Я/<br>Н</div>
<div class="rt" style="left:406.5px;top:325.8px;font-size:10.67px;line-height:16px;">В</div>
<div class="rt" style="left:424.5px;top:325.8px;font-size:10.67px;line-height:16px;">В</div>
<div class="rt" style="left:442.5px;top:325.8px;font-size:10.67px;line-height:16px;">В</div>
<div class="rt" style="left:460.5px;top:325.8px;font-size:10.67px;line-height:16px;">Я/<br>Н</div>
<div class="rt" style="left:478.5px;top:325.8px;font-size:10.67px;line-height:16px;">Я/<br>Н</div>
<div class="rt" style="left:496.5px;top:325.8px;font-size:10.67px;line-height:16px;">В</div>
<div class="rt" style="left:514.5px;top:325.8px;font-size:10.67px;line-height:16px;">В</div>
<div class="rt" style="left:532.5px;top:325.8px;font-size:10.67px;line-height:16px;">В</div>
<div class="rt" style="left:550.5px;top:325.8px;font-size:10.67px;line-height:16px;">Я/<br>Н</div>
<div class="rt" style="left:568.5px;top:325.8px;font-size:10.67px;line-height:16px;">Я/<br>Н</div>
<div class="rt" style="left:586.5px;top:325.8px;font-size:10.67px;line-height:16px;">В</div>
<div class="rt" style="left:604.5px;top:325.8px;font-size:10.67px;line-height:16px;">В</div>
<div class="rt" style="left:622.5px;top:325.8px;font-size:10.67px;line-height:16px;">В</div>
<div class="rt" style="left:640.5px;top:325.8px;font-size:10.67px;line-height:16px;">Я/<br>Н</div>
<div class="rt" style="left:658.5px;top:325.8px;font-size:10.67px;line-height:16px;">Я/<br>Н</div>
<div class="rt" style="left:676.5px;top:325.8px;font-size:10.67px;line-height:16px;">В</div>
<div class="rt" style="left:694.5px;top:325.8px;font-size:10.67px;line-height:16px;">В</div>
<div class="rt" style="left:712.5px;top:325.8px;font-size:10.67px;line-height:16px;">В</div>
<div class="rt" style="left:730.5px;top:325.8px;font-size:10.67px;line-height:16px;">Я/<br>Н</div>
<div class="rt" style="left:748.5px;top:325.8px;font-size:10.67px;line-height:16px;">Я/<br>Н</div>
<div class="rc" style="left:758.0px;width:30px;top:325.8px;font-size:10.67px;line-height:16px;">12</div>
<div class="rc" style="left:777.0px;width:30px;top:325.8px;font-size:10.67px;line-height:16px;">0</div>
<div class="rc" style="left:797.0px;width:30px;top:325.8px;font-size:10.67px;line-height:16px;">0</div>
<div class="rc" style="left:817.5px;width:30px;top:325.8px;font-size:10.67px;line-height:16px;">0</div>
<div class="rc" style="left:838.0px;width:30px;top:325.8px;font-size:10.67px;line-height:16px;">18</div>
<div class="rc" style="left:860.0px;width:30px;top:325.8px;font-size:10.67px;line-height:16px;">0</div>
<div class="rc" style="left:883.0px;width:30px;top:325.8px;font-size:10.67px;line-height:16px;">0</div>
<div class="rc" style="left:909.0px;width:30px;top:325.8px;font-size:10.67px;line-height:16px;">0</div>
<div class="rc" style="left:938.0px;width:30px;top:325.8px;font-size:10.67px;line-height:16px;">0</div>
<div class="rc" style="left:965.5px;width:30px;top:325.8px;font-size:10.67px;line-height:16px;">0</div>
<div class="rc" style="left:996.5px;width:30px;top:325.8px;font-size:10.67px;line-height:16px;">30</div>
<div class="rc" style="left:1027.7px;width:60px;top:343.1px;font-size:10.67px;line-height:16px;">96,00</div>
</div>
</div>
</div>
<div id="pt" class="a">
<div id="ptt" class="a"><div class="t" style="left:3px;top:4px;font-size:12px;line-height:15px">Предварительный просмотр</div>
<div class="a" style="left:246px;top:3px;width:18px;height:16px;background:#C75050;color:#fff;font-weight:bold;font-size:11px;line-height:14px;text-align:center">x</div></div>
<div id="ptb" class="a">
<svg class="a" style="left:11px;top:7px" width="11" height="13" viewBox="0 0 11 13"><path d="M1 1v11" stroke="#9D9D9D" stroke-width="2"/><path d="M10 1v11l-6-5.500z" fill="#9D9D9D"/></svg>
<svg class="a" style="left:36px;top:7px" width="7" height="13" viewBox="0 0 7 13"><path d="M6.500 1v11l-6.500-5.500z" fill="#9D9D9D"/></svg>
<div class="sep" style="left:54px"></div>
<svg class="a" style="left:63px;top:6px" width="15" height="15" viewBox="0 0 15 15"><path d="M1.500 1.500h6v2h2v6h-8z" fill="#fff" stroke="#000"/><path d="M5.500 5.500h5l3 3v5h-8z" fill="#fff" stroke="#000"/><path d="M10.500 5.500v3h3" fill="none" stroke="#000"/></svg>
<div class="sep" style="left:85px"></div>
<svg class="a" style="left:98px;top:7px" width="7" height="13" viewBox="0 0 7 13"><path d="M0 1v11l6.500-5.500z" fill="#9D9D9D"/></svg>
<svg class="a" style="left:119px;top:7px" width="11" height="13" viewBox="0 0 11 13"><path d="M9 1v11" stroke="#9D9D9D" stroke-width="2"/><path d="M0 1v11l6-5.500z" fill="#9D9D9D"/></svg>
<div class="sep" style="left:139px"></div>
<div class="a" style="left:145px;top:4px;width:56px;height:22px;background:#fff;border:1px solid #7A7A7A"><div class="t" style="left:3px;top:3px;font-size:11px;letter-spacing:-.65px;line-height:14px">100%</div><div class="a" style="left:36px;top:1px;width:17px;height:18px;background:#E1E1E1;border:1px solid #ADADAD"><svg class="a" style="left:3px;top:5px" width="10" height="7" viewBox="0 0 10 7"><path d="M1 1l4 4 4-4" fill="none" stroke="#555" stroke-width="1.200"/></svg></div></div>
<div class="sep" style="left:204px"></div>
<div class="a" style="left:209px;top:4px;width:21px;height:20px;background:#E3E3E3;border:1px solid #C8C8C8"><svg class="a" style="left:1px;top:0px" width="16" height="16" viewBox="0 0 16 16"><path d="M1.500 11V1.500h7V11" fill="#fff" stroke="#000"/><path d="M2 2.500l3.500 2.500v10.500l-3.500-4z" fill="#8F8F00" stroke="#000"/><path d="M0 11.500h2M5.500 11.500h7.500" stroke="#000"/><path d="M10 6.500l3.500-3.500v2h2.500v3h-2.500v2z" fill="#0000A0"/></svg></div>
<div class="sep" style="left:234px"></div>
<svg class="a" style="left:241px;top:7px" width="17" height="15" viewBox="0 0 18 16"><path d="M2.500 6h9.500l1.500-2h2l1.200 1.500v5l-4.200 4.500h-10l-2.200-2v-4.500z" fill="#000"/><path d="M6.500 .5h7.500l-2.500 5.500h-8z" fill="#fff" stroke="#000"/><path d="M7.200 2.500h3.500M6 4.400h3.700" stroke="#000"/><path d="M2.300 7.300h9.200" stroke="#8A8A8A" stroke-width=".8"/><rect x="1" y="9" width="11" height="3" fill="#8A8A8A"/><path d="M7.800 9.800h3.200" stroke="#000"/><path d="M7.800 10.900h3.200" stroke="#fff"/><path d="M2.300 13.600h8.700" stroke="#8A8A8A" stroke-width=".8"/><path d="M13 8.500l3.200-3.500v3.500l-3.200 4z" fill="#808080"/></svg>
</div></div>
<div class="lb" style="left:32px;top:890px;font-size:13.33px;line-height:15px">За период</div>
<div class="lb" style="left:104px;top:875px;font-size:11.4px;line-height:13px">Месяц</div>
<div class="lb" style="left:201px;top:875px;font-size:11.4px;line-height:13px">Год</div>
<div class="inp" style="left:104px;top:886px;width:95px;height:24px"><div class="t" style="left:4px;top:4px;font-size:12.2px;line-height:15px">ноябрь</div><div class="a" style="left:76px;top:1px;width:17px;height:20px;background:#E1E1E1;border:1px solid #ADADAD"><svg class="a" style="left:3px;top:6px" width="10" height="7" viewBox="0 0 10 7"><path d="M1 1l4 4 4-4" fill="none" stroke="#555" stroke-width="1.200"/></svg></div></div>
<div class="inp" style="left:200px;top:886px;width:72px;height:24px"><div class="t" style="right:23px;top:4px;font-size:12.2px;line-height:15px">2017</div><div class="a" style="left:54px;top:2px;width:15px;height:9px;background:#E1E1E1;border:1px solid #ADADAD"><div class="arr" style="left:3px;top:-2px;border-width:3px;border-bottom:3px solid #000"></div></div><div class="a" style="left:54px;top:11px;width:15px;height:9px;background:#E1E1E1;border:1px solid #ADADAD"><div class="arr" style="left:3px;top:2px;border-width:3px;border-top:3px solid #000;border-bottom-width:0"></div></div></div>
<div class="btn blue" style="left:105px;top:911px;width:166px;height:22px;font-size:12.2px;line-height:20px">Заполнить период</div>
<div class="btn" style="left:105px;top:935px;width:82px;height:22px;font-size:12.2px;line-height:20px">Добавить</div>
<div class="btn" style="left:189px;top:935px;width:82px;height:22px;font-size:12.2px;line-height:20px">Удалить</div>
<div class="lb" style="left:285px;top:886px;font-size:13px;line-height:15px">№</div>
<div class="lb" style="left:285px;top:922px;font-size:13px;line-height:15px">Дата</div>
<div class="inp" style="left:320px;top:883px;width:108px;height:23px"></div>
<div class="inp" style="left:320px;top:919px;width:84px;height:23px"><div class="t" style="left:10px;top:3px;font-size:12.2px;line-height:15px">.&nbsp;&nbsp;.</div></div>
<div class="btn" style="left:405px;top:919px;width:22px;height:22px;font-size:12px;line-height:18px">...</div>
<div class="btn blue" style="left:441px;top:883px;width:154px;height:58px;font-size:12.2px;line-height:15px"><svg class="a" style="left:69px;top:5px" width="16" height="15" viewBox="0 0 16 15"><rect x="0" y="0" width="16" height="15" fill="#C8C8C8"/><path d="M2.500 2.500h11v10h-11z" fill="#80FFFF" stroke="#000"/><path d="M8 2v11M3 5.500h10M3 8.500h10" stroke="#000"/><path d="M4 4h3M4 7h3M4 10.500h3M9.500 7h3M9.500 10.500h3" stroke="#000" stroke-width="1"/></svg><div class="a" style="left:0;top:22px;width:152px;text-align:center">Карточка учета рабочего<br>времени сотрудника</div></div>
<div class="btn blue" style="left:633px;top:883px;width:154px;height:58px;border:2px solid #0078D7;font-size:12.2px;line-height:15px"><div class="a" style="left:1px;top:1px;width:148px;height:52px;border:1px solid #D8D800"></div><div class="a" style="left:1px;top:1px;width:148px;height:52px;border:1px dotted #000"></div><svg class="a" style="left:67px;top:3px" width="18" height="16" viewBox="0 0 18 16"><path d="M2.500 6h9.500l1.500-2h2l1.200 1.500v5l-4.200 4.500h-10l-2.200-2v-4.500z" fill="#000"/><path d="M6.500 .5h7.500l-2.500 5.500h-8z" fill="#fff" stroke="#000"/><path d="M7.200 2.500h3.500M6 4.400h3.700" stroke="#000"/><path d="M2.300 7.300h9.200" stroke="#8A8A8A" stroke-width=".8"/><rect x="1" y="9" width="11" height="3" fill="#8A8A8A"/><path d="M7.800 9.800h3.200" stroke="#000"/><path d="M7.800 10.900h3.200" stroke="#fff"/><path d="M2.300 13.600h8.700" stroke="#8A8A8A" stroke-width=".8"/><path d="M13 8.500l3.200-3.500v3.500l-3.200 4z" fill="#808080"/></svg><div class="a" style="left:0;top:23px;width:150px;text-align:center">Табель учета рабочего<br>времени</div></div>
<div class="a" style="left:788px;top:894px;width:25px;height:1px;background:#808080"></div>
<div class="cb" style="left:812px;top:888px"><svg class="a" style="left:1px;top:1px" width="10" height="10" viewBox="0 0 10 10"><path d="M.8 4.600l3 3 5.800-6" fill="none" stroke="#444" stroke-width="1.400"/></svg></div><div class="cl" style="left:828px;top:888px">Просмотр</div>
<div class="cb" style="left:812px;top:903px"></div><div class="cl" style="left:828px;top:903px">в MS Excel</div>
<div class="cb" style="left:812px;top:918px"></div><div class="cl" style="left:828px;top:918px">Форма 0504421</div>
<div class="cb" style="left:633px;top:944px"></div><div class="cl" style="left:649px;top:944px">T13</div>
<div class="cb" style="left:677px;top:944px"></div><div class="cl" style="left:693px;top:944px">по отделам</div>
<div class="cb" style="left:764px;top:944px"></div><div class="cl" style="left:780px;top:944px">аванс</div>
<div class="btn blue" style="left:1791px;top:887px;width:82px;height:46px;font-size:12.2px;line-height:15px"><svg class="a" style="left:32px;top:7px" width="16" height="16" viewBox="0 0 16 16"><rect x="0" y="0" width="16" height="16" fill="#D2D2D2"/><path d="M1.500 11V1.500h7V11" fill="#fff" stroke="#000"/><path d="M2 2.500l3.500 2.500v10.500l-3.500-4z" fill="#8F8F00" stroke="#000"/><path d="M0 11.500h2M5.500 11.500h7.500" stroke="#000"/><path d="M10 6.500l3.500-3.500v2h2.500v3h-2.500v2z" fill="#0000A0"/></svg><div class="a" style="left:0;top:29px;width:80px;text-align:center">Выход</div></div>

</body></html>
